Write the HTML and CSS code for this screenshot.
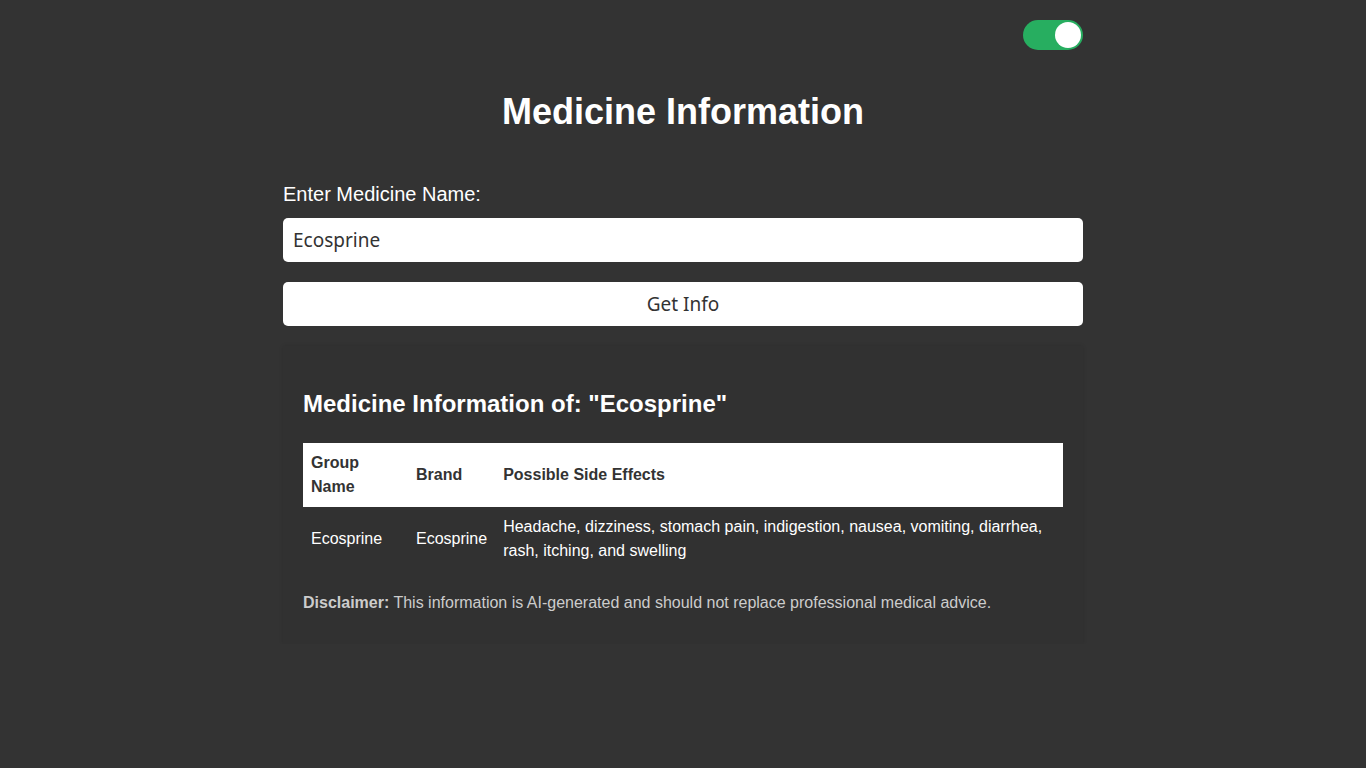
FILE: index.html
```html
<!DOCTYPE html>
<html lang="en">
<head>
<meta charset="utf-8">
<title>Medicine Information</title>
<link rel="stylesheet" href="styles.css">
</head>
<body>
<div class="page">
  <div class="topbar">
    <label class="switch"><span class="knob"></span></label>
  </div>
  <h1 class="title">Medicine Information</h1>
  <label class="field-label" for="med">Enter Medicine Name:</label>
  <input id="med" class="field" type="text" value="Ecosprine">
  <button class="btn">Get Info</button>
  <div class="card">
    <h2 class="card-title">Medicine Information of: "Ecosprine"</h2>
    <table class="info">
      <colgroup><col class="c1"><col class="c2"><col class="c3"></colgroup>
      <thead>
        <tr><th>Group Name</th><th>Brand</th><th>Possible Side Effects</th></tr>
      </thead>
      <tbody>
        <tr><td>Ecosprine</td><td>Ecosprine</td><td>Headache, dizziness, stomach pain, indigestion, nausea, vomiting, diarrhea, rash, itching, and swelling</td></tr>
      </tbody>
    </table>
    <p class="disclaimer"><strong>Disclaimer:</strong> This information is AI-generated and should not replace professional medical advice.</p>
  </div>
</div>
</body>
</html>
```
FILE: styles.css
```css
html, body {
  margin: 0;
  padding: 0;
  background: #333333;
}
body {
  font-family: "Liberation Sans", Arial, sans-serif;
  color: #ffffff;
}
.page {
  width: 800px;
  margin: 0 auto;
  padding-top: 20px;
  display: flex;
  flex-direction: column;
}
.topbar {
  display: flex;
  justify-content: flex-end;
}
.switch {
  width: 60px;
  height: 30px;
  border-radius: 15px;
  background: #27ae60;
  display: flex;
  align-items: center;
  justify-content: flex-end;
  padding: 0 2px;
  box-sizing: border-box;
}
.knob {
  width: 26px;
  height: 26px;
  border-radius: 50%;
  background: #ffffff;
}
.title {
  font-size: 36px;
  font-weight: bold;
  text-align: center;
  margin: 41px 0 0;
  line-height: 42px;
}
.field-label {
  font-size: 20px;
  line-height: 24px;
  margin-top: 49px;
}
.field {
  margin-top: 12px;
  height: 44px;
  box-sizing: border-box;
  border: none;
  border-radius: 5px;
  padding: 0 10px;
  font-family: "Noto Sans", sans-serif;
  font-size: 19px;
  color: #333333;
  background: #ffffff;
  outline: none;
}
.btn {
  margin-top: 20px;
  height: 44px;
  border: none;
  border-radius: 5px;
  background: #ffffff;
  color: #333333;
  font-family: "Noto Sans", sans-serif;
  font-size: 19px;
  padding: 0;
}
.card {
  margin-top: 20px;
  padding: 20px;
  background: #313131;
  box-shadow: 0 0 4px rgba(0, 0, 0, 0.12);
}
.card-title {
  font-size: 24px;
  line-height: 36px;
  margin: 20px 0 21px;
  font-weight: bold;
}
.info {
  width: 100%;
  border-collapse: collapse;
  font-size: 16px;
  line-height: 24px;
}
.info .c1 { width: 105px; }
.info .c2 { width: 87px; }
.info th {
  background: #ffffff;
  color: #333333;
  text-align: left;
  font-weight: bold;
  padding: 8px;
}
.info td {
  padding: 8px;
  color: #ffffff;
}
.disclaimer {
  margin: 20px 0 9px;
  font-size: 16px;
  line-height: 24px;
  color: #cccccc;
}
.disclaimer strong {
  color: #cccccc;
}
```
